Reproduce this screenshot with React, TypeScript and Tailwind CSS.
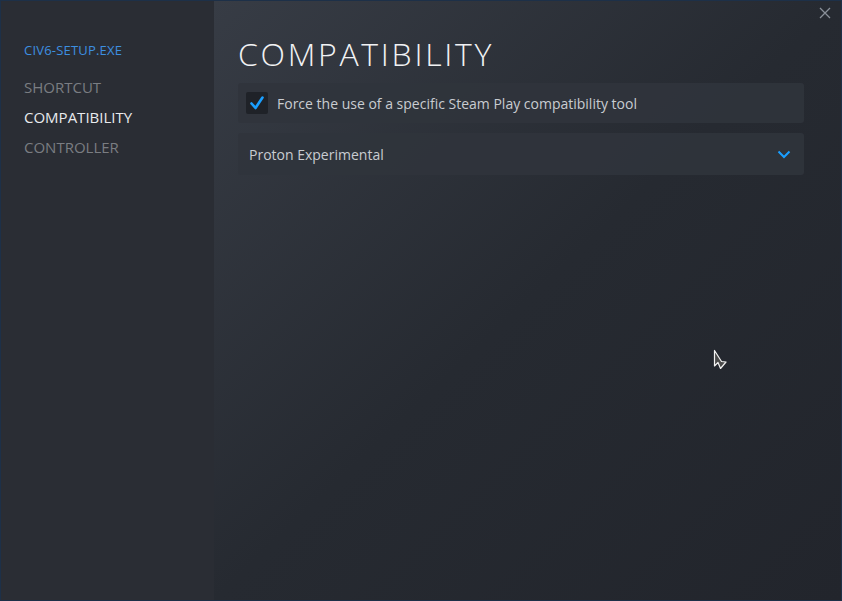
import React from 'react';

const navItems = [
  { label: 'SHORTCUT', active: false },
  { label: 'COMPATIBILITY', active: true },
  { label: 'CONTROLLER', active: false },
];

export default function App() {
  return (
    <div
      className="relative flex h-[601px] w-[842px] overflow-hidden border border-[#1d3048] bg-[#23262e]"
      style={{ fontFamily: '"Open Sans", "Noto Sans", sans-serif' }}
    >
      {/* sidebar */}
      <aside className="flex w-[213px] shrink-0 flex-col bg-[#2a2d34] pl-[23px] pt-[40px]">
        <div className="mb-[19px] text-[13px] tracking-[0.2px] leading-[18px] text-[#3d8fe0]">CIV6-SETUP.EXE</div>
        {navItems.map((item) => (
          <div
            key={item.label}
            className={`h-[30px] text-[15px] leading-[19px] ${item.active ? 'text-[#e8eaed]' : 'text-[#7a7d82]'}`}
          >
            {item.label}
          </div>
        ))}
      </aside>

      {/* main */}
      <main className="flex flex-1 flex-col bg-gradient-to-br from-[#373c45] via-[#262a31] to-[#22252c] pl-[24px] pr-[37px] pt-[33px]">
        <h1 className="mb-[9px] text-[32px] font-light leading-[40px] tracking-[2.7px] text-[#f1f2f4]">COMPATIBILITY</h1>

        <div className="flex h-[40px] items-center gap-[9px] rounded-[3px] bg-[#30343c]/90 px-[8px]">
          <div className="flex h-[22px] w-[22px] items-center justify-center rounded-[2px] bg-[#1f2228]">
            <svg width="16" height="16" viewBox="0 0 16 16" fill="none">
              <path d="M2.5 8.5 L6.5 13 L13.5 2.5" stroke="#1a9fff" strokeWidth="2.6" strokeLinecap="round" strokeLinejoin="round" />
            </svg>
          </div>
          <span className="text-[14px] text-[#c9ccd1]">Force the use of a specific Steam Play compatibility tool</span>
        </div>

        <div className="mt-[10px] flex h-[42px] items-center justify-between rounded-[3px] bg-[#30343c]/90 pl-[11px] pr-[13px]">
          <span className="text-[14px] text-[#c9ccd1]">Proton Experimental</span>
          <svg width="14" height="9" viewBox="0 0 14 9" fill="none">
            <path d="M1.5 1.5 L7 7 L12.5 1.5" stroke="#1a9fff" strokeWidth="2" />
          </svg>
        </div>
      </main>

      {/* close */}
      <svg className="absolute right-[10px] top-[6px]" width="12" height="12" viewBox="0 0 12 12" fill="none">
        <path d="M1 1 L11 11 M11 1 L1 11" stroke="#8a9099" strokeWidth="1.3" />
      </svg>

      {/* mouse pointer */}
      <svg className="absolute left-[712px] top-[348px]" width="14" height="22" viewBox="0 0 14 22" fill="none">
        <path d="M1.5 1.5 L1.5 17 L5 13.5 L7.5 19.5 L13 13 L8.5 12.5 Z" fill="#4a4a4a" stroke="#f2f2f2" strokeWidth="1.2" strokeLinejoin="round" />
      </svg>
    </div>
  );
}
